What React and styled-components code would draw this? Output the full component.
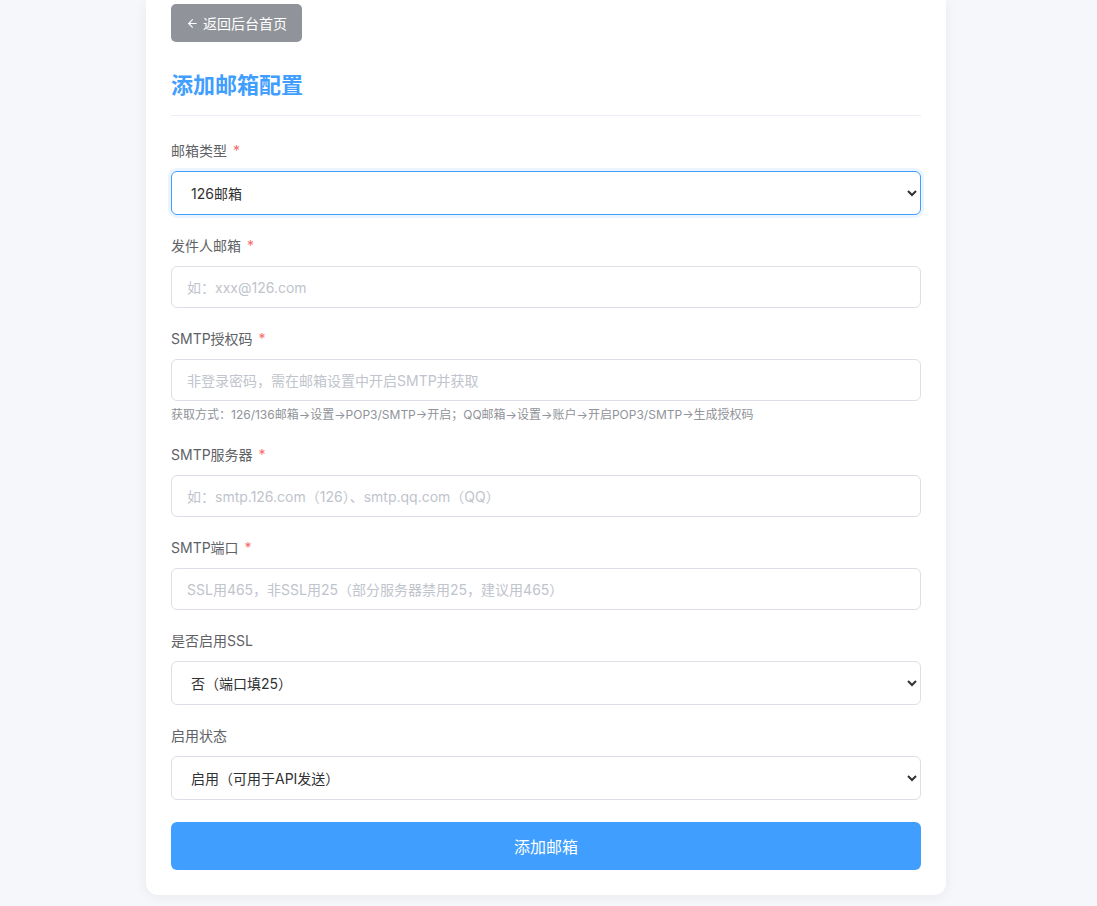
import React from 'react';
import styled, { createGlobalStyle, css } from 'styled-components';
import { ArrowLeft } from 'lucide-react';

const GlobalStyle = createGlobalStyle`
  html, body {
    margin: 0;
    padding: 0;
    background: #f5f7fa;
    font-family: "Inter", "Noto Sans CJK SC", sans-serif;
    color: #303133;
  }
  * { box-sizing: border-box; }
`;

const fields = [
  { label: '发件人邮箱', required: true, placeholder: '如：xxx@126.com' },
  {
    label: 'SMTP授权码',
    required: true,
    placeholder: '非登录密码，需在邮箱设置中开启SMTP并获取',
    hint: '获取方式：126/136邮箱→设置→POP3/SMTP→开启；QQ邮箱→设置→账户→开启POP3/SMTP→生成授权码',
  },
  { label: 'SMTP服务器', required: true, placeholder: '如：smtp.126.com（126）、smtp.qq.com（QQ）' },
  { label: 'SMTP端口', required: true, placeholder: 'SSL用465，非SSL用25（部分服务器禁用25，建议用465）' },
];

const App = () => {
  return (
    <>
      <GlobalStyle />
      <Page>
        <Card>
          <BackButton type="button">
            <ArrowLeft size={13} strokeWidth={2} />
            返回后台首页
          </BackButton>
          <Title>添加邮箱配置</Title>

          <Group>
            <Label>邮箱类型<Star>*</Star></Label>
            <Select focused defaultValue="126">
              <option value="126">126邮箱</option>
              <option value="136">136邮箱</option>
              <option value="qq">QQ邮箱</option>
            </Select>
          </Group>

          {fields.map((f) => (
            <Group key={f.label}>
              <Label>{f.label}{f.required && <Star>*</Star>}</Label>
              <Input placeholder={f.placeholder} />
              {f.hint && <Hint>{f.hint}</Hint>}
            </Group>
          ))}

          <Group>
            <Label>是否启用SSL</Label>
            <Select defaultValue="0">
              <option value="0">否（端口填25）</option>
              <option value="1">是（端口填465）</option>
            </Select>
          </Group>

          <Group>
            <Label>启用状态</Label>
            <Select defaultValue="1">
              <option value="1">启用（可用于API发送）</option>
              <option value="0">停用</option>
            </Select>
          </Group>

          <SubmitButton type="button">添加邮箱</SubmitButton>
        </Card>
      </Page>
    </>
  );
};

export default App;

const Page = styled.div`
  display: flex;
  justify-content: center;
  padding: 0 5px 10px 0;
`;

const Card = styled.div`
  width: 800px;
  background: #fff;
  padding: 4px 25px 25px;
  border-radius: 0 0 12px 12px;
  box-shadow: 0 2px 14px rgba(0, 0, 0, 0.06);
`;

const BackButton = styled.button`
  display: inline-flex;
  align-items: center;
  gap: 4px;
  height: 38px;
  padding: 0 15px;
  border: none;
  border-radius: 5px;
  background: #909399;
  color: #fff;
  font-family: inherit;
  font-size: 14px;
  cursor: pointer;
`;

const Title = styled.h2`
  margin: 28px 0 25px;
  padding-bottom: 15px;
  border-bottom: 1px solid #ebeef5;
  color: #409eff;
  font-size: 22px;
  font-weight: 700;
  line-height: 30px;
`;

const Group = styled.div`
  margin-bottom: 21px;
`;

const Label = styled.label`
  display: block;
  margin-bottom: 10px;
  color: #606266;
  font-size: 14px;
  line-height: 20px;
`;

const Star = styled.span`
  margin-left: 6px;
  color: #f56c6c;
`;

const fieldBase = css`
  display: block;
  width: 100%;
  border: 1px solid #dcdfe6;
  border-radius: 6px;
  background: #fff;
  font-family: inherit;
  font-size: 14px;
  color: #303133;
  outline: none;
`;

const Input = styled.input`
  ${fieldBase}
  height: 42px;
  padding: 0 15px;
  &::placeholder {
    color: #c0c4cc;
  }
`;

const Select = styled.select`
  ${fieldBase}
  height: 44px;
  padding: 0 15px;
  ${(p) =>
    p.focused &&
    css`
      border-color: #409eff;
      box-shadow: 0 0 0 3px rgba(64, 158, 255, 0.1);
    `}
`;

const Hint = styled.div`
  margin-top: 5px;
  color: #909399;
  font-size: 12px;
  line-height: 18px;
`;

const SubmitButton = styled.button`
  display: block;
  width: 100%;
  height: 48px;
  margin-top: 22px;
  border: none;
  border-radius: 6px;
  background: #409eff;
  color: #fff;
  font-family: inherit;
  font-size: 16px;
  cursor: pointer;
`;
